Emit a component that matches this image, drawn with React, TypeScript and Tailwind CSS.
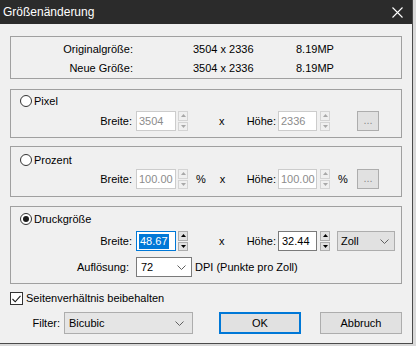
import React from 'react';

const Spin = ({ enabled }: { enabled?: boolean }) => {
    const border = enabled ? 'border-[#adadad] bg-[#e1e1e1]' : 'border-[#d4d4d4] bg-[#f0f0f0]';
    const fill = enabled ? '#000000' : '#a8a8a8';
    return (
        <div className="flex flex-col w-[10px] h-[20px] gap-[1px]">
            <div className={`flex-1 border ${border} flex items-center justify-center`}>
                <svg width="5" height="3" viewBox="0 0 5 3"><polygon points="2.5,0 5,3 0,3" fill={fill} /></svg>
            </div>
            <div className={`flex-1 border ${border} flex items-center justify-center`}>
                <svg width="5" height="3" viewBox="0 0 5 3"><polygon points="0,0 5,0 2.5,3" fill={fill} /></svg>
            </div>
        </div>
    );
};

const Chevron = () => (
    <svg width="9" height="5" viewBox="0 0 9 5" className="shrink-0">
        <polyline points="0.5,0.5 4.5,4.5 8.5,0.5" fill="none" stroke="#606060" strokeWidth="1" />
    </svg>
);

const Radio = ({ checked }: { checked?: boolean }) => (
    <div className="w-[12px] h-[12px] rounded-full border border-[#333333] bg-white flex items-center justify-center shrink-0">
        {checked && <div className="w-[6px] h-[6px] rounded-full bg-[#1a1a1a]" />}
    </div>
);

const DisabledInput = ({ value, w }: { value: string; w: string }) => (
    <div className={`${w} h-[20px] border border-[#cccccc] bg-white text-[#8c8c8c] pl-[2px] flex items-center`}>{value}</div>
);

const Dots = () => (
    <div className="ml-auto w-[22px] h-[20px] border border-[#adadad] bg-[#e1e1e1] text-[#8c8c8c] flex items-center justify-center leading-none pb-[2px]">...</div>
);

export default function App() {
    return (
        <div className="w-[416px] h-[346px] bg-[#d9d9d9] font-['Liberation_Sans',Arial,sans-serif] text-[11px] text-black">
            <div className="w-[413px] h-[344px] bg-[#f0f0f0] flex flex-col border-r border-b border-[#4a4a4a]">
                {/* title bar */}
                <div className="h-[24px] bg-[#2b2b2b] flex items-center pl-[3px] pr-[9px] text-white text-[12px]">
                    <span>Größenänderung</span>
                    <svg width="11" height="11" viewBox="0 0 11 11" className="ml-auto">
                        <path d="M0.5 0.5 L10.5 10.5 M10.5 0.5 L0.5 10.5" stroke="#ffffff" strokeWidth="1.1" />
                    </svg>
                </div>

                <div className="flex flex-col px-[10px]">
                    {/* info */}
                    <div className="mt-[12px] h-[43px] border border-[#a0a0a0] pt-[3px] flex flex-col">
                        <div className="h-[19px] flex items-center">
                            <span className="w-[122px] text-right">Originalgröße:</span>
                            <span className="ml-[60px] w-[103px]">3504 x 2336</span>
                            <span>8.19MP</span>
                        </div>
                        <div className="h-[19px] flex items-center">
                            <span className="w-[122px] text-right">Neue Größe:</span>
                            <span className="ml-[60px] w-[103px]">3504 x 2336</span>
                            <span>8.19MP</span>
                        </div>
                    </div>

                    {/* Pixel */}
                    <div className="mt-[10px] h-[49px] border border-[#a0a0a0] pt-[5px] flex flex-col">
                        <div className="h-[12px] flex items-center pl-[9px] gap-[2px]">
                            <Radio />
                            <span>Pixel</span>
                        </div>
                        <div className="mt-[4px] h-[20px] flex items-center pr-[22px]">
                            <span className="w-[121px] text-right">Breite:</span>
                            <div className="ml-[4px]"><DisabledInput value="3504" w="w-[40px]" /></div>
                            <div className="ml-[2px]"><Spin /></div>
                            <div className="w-[88px] flex items-center">
                                <span className="ml-[31px]">x</span>
                                <span className="flex-1 text-right">Höhe:</span>
                            </div>
                            <div className="ml-[2px]"><DisabledInput value="2336" w="w-[39px]" /></div>
                            <div className="ml-[3px]"><Spin /></div>
                            <Dots />
                        </div>
                    </div>

                    {/* Prozent */}
                    <div className="mt-[8px] h-[51px] border border-[#a0a0a0] pt-[7px] flex flex-col">
                        <div className="h-[12px] flex items-center pl-[9px] gap-[2px]">
                            <Radio />
                            <span>Prozent</span>
                        </div>
                        <div className="mt-[3px] h-[20px] flex items-center pr-[22px]">
                            <span className="w-[121px] text-right">Breite:</span>
                            <div className="ml-[4px]"><DisabledInput value="100.00" w="w-[40px]" /></div>
                            <div className="ml-[2px]"><Spin /></div>
                            <div className="w-[88px] flex items-center">
                                <span className="ml-[8px]">%</span>
                                <span className="ml-[14px]">x</span>
                                <span className="flex-1 text-right">Höhe:</span>
                            </div>
                            <div className="ml-[2px]"><DisabledInput value="100.00" w="w-[39px]" /></div>
                            <div className="ml-[3px]"><Spin /></div>
                            <span className="ml-[8px]">%</span>
                            <Dots />
                        </div>
                    </div>

                    {/* Druckgröße */}
                    <div className="mt-[9px] h-[78px] border border-[#a0a0a0] pt-[6px] flex flex-col">
                        <div className="h-[12px] flex items-center pl-[9px] gap-[2px]">
                            <Radio checked />
                            <span>Druckgröße</span>
                        </div>
                        <div className="mt-[6px] h-[20px] flex items-center">
                            <span className="w-[121px] text-right">Breite:</span>
                            <div className="ml-[4px] w-[40px] h-[20px] border border-[#0078d7] bg-white pl-[2px] flex items-center">
                                <span className="bg-[#0078d7] text-white leading-[15px] px-[1px]">48.67</span>
                            </div>
                            <div className="ml-[2px]"><Spin enabled /></div>
                            <div className="w-[88px] flex items-center">
                                <span className="ml-[31px]">x</span>
                                <span className="flex-1 text-right">Höhe:</span>
                            </div>
                            <div className="ml-[2px] w-[39px] h-[20px] border border-[#7a7a7a] bg-white pl-[3px] flex items-center">32.44</div>
                            <div className="ml-[3px]"><Spin enabled /></div>
                            <div className="ml-[7px] w-[58px] h-[20px] border border-[#adadad] bg-[#e1e1e1] pl-[3px] pr-[5px] flex items-center">
                                <span className="flex-1">Zoll</span>
                                <Chevron />
                            </div>
                        </div>
                        <div className="mt-[6px] h-[20px] flex items-center">
                            <span className="w-[118px] text-right">Auflösung:</span>
                            <div className="ml-[7px] w-[56px] h-[20px] border border-[#7a7a7a] bg-white pl-[4px] pr-[5px] flex items-center">
                                <span className="flex-1">72</span>
                                <Chevron />
                            </div>
                            <span className="ml-[3px]">DPI (Punkte pro Zoll)</span>
                        </div>
                    </div>

                    {/* checkbox */}
                    <div className="mt-[8px] h-[13px] flex items-center gap-[3px]">
                        <div className="w-[13px] h-[13px] border border-[#333333] bg-white flex items-center justify-center shrink-0">
                            <svg width="9" height="8" viewBox="0 0 9 8">
                                <polyline points="0.5,4 3.2,6.8 8.5,0.8" fill="none" stroke="#1a1a1a" strokeWidth="1.1" />
                            </svg>
                        </div>
                        <span>Seitenverhältnis beibehalten</span>
                    </div>

                    {/* bottom row */}
                    <div className="mt-[7px] h-[22px] flex items-center">
                        <span className="w-[50px] text-right">Filter:</span>
                        <div className="ml-[4px] w-[129px] h-[22px] border border-[#adadad] bg-[#e5e5e5] pl-[4px] pr-[8px] flex items-center">
                            <span className="flex-1">Bicubic</span>
                            <Chevron />
                        </div>
                        <button className="ml-[26px] w-[82px] h-[22px] border-2 border-[#0078d7] bg-[#e1e1e1] flex items-center justify-center">OK</button>
                        <button className="ml-[19px] w-[82px] h-[22px] border border-[#adadad] bg-[#e1e1e1] flex items-center justify-center">Abbruch</button>
                    </div>
                </div>
            </div>
        </div>
    );
}
